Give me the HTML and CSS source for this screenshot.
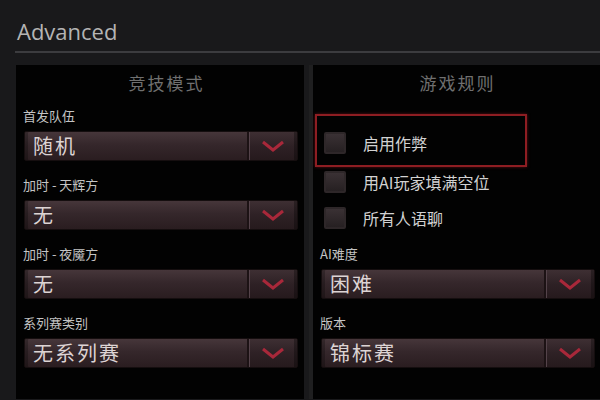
FILE: index.html
```html
<!DOCTYPE html>
<html lang="zh-CN">
<head>
    <meta charset="UTF-8">
    <meta name="viewport" content="width=device-width, initial-scale=1.0">
    <title>Advanced</title>
    <link rel="stylesheet" href="styles.css">
</head>
<body>
    <div class="settings">
        <h1 class="settings-title">Advanced</h1>
        <div class="settings-rule"></div>

        <div class="columns">
            <!-- left column: match mode -->
            <section class="panel">
                <h2 class="panel-title">竞技模式</h2>

                <div class="field field-first">
                    <div class="field-label">首发队伍</div>
                    <div class="dropdown">
                        <span class="dropdown-value">随机</span>
                        <span class="dropdown-arrow">
                            <svg width="24" height="12" viewBox="0 0 24 12"><path d="M2 2 L12 10 L22 2" fill="none" stroke="#a8283a" stroke-width="3"/></svg>
                        </span>
                    </div>
                </div>

                <div class="field">
                    <div class="field-label">加时 - 天辉方</div>
                    <div class="dropdown">
                        <span class="dropdown-value">无</span>
                        <span class="dropdown-arrow">
                            <svg width="24" height="12" viewBox="0 0 24 12"><path d="M2 2 L12 10 L22 2" fill="none" stroke="#a8283a" stroke-width="3"/></svg>
                        </span>
                    </div>
                </div>

                <div class="field">
                    <div class="field-label">加时 - 夜魇方</div>
                    <div class="dropdown">
                        <span class="dropdown-value">无</span>
                        <span class="dropdown-arrow">
                            <svg width="24" height="12" viewBox="0 0 24 12"><path d="M2 2 L12 10 L22 2" fill="none" stroke="#a8283a" stroke-width="3"/></svg>
                        </span>
                    </div>
                </div>

                <div class="field">
                    <div class="field-label">系列赛类别</div>
                    <div class="dropdown">
                        <span class="dropdown-value">无系列赛</span>
                        <span class="dropdown-arrow">
                            <svg width="24" height="12" viewBox="0 0 24 12"><path d="M2 2 L12 10 L22 2" fill="none" stroke="#a8283a" stroke-width="3"/></svg>
                        </span>
                    </div>
                </div>
            </section>

            <!-- right column: game rules -->
            <section class="panel">
                <h2 class="panel-title">游戏规则</h2>

                <div class="check-list">
                    <label class="check-row focused">
                        <span class="check-box"></span>
                        <span class="check-text">启用作弊</span>
                    </label>
                    <label class="check-row">
                        <span class="check-box"></span>
                        <span class="check-text">用AI玩家填满空位</span>
                    </label>
                    <label class="check-row">
                        <span class="check-box"></span>
                        <span class="check-text">所有人语聊</span>
                    </label>
                </div>

                <div class="field field-after-checks">
                    <div class="field-label">AI难度</div>
                    <div class="dropdown">
                        <span class="dropdown-value">困难</span>
                        <span class="dropdown-arrow">
                            <svg width="24" height="12" viewBox="0 0 24 12"><path d="M2 2 L12 10 L22 2" fill="none" stroke="#a8283a" stroke-width="3"/></svg>
                        </span>
                    </div>
                </div>

                <div class="field">
                    <div class="field-label">版本</div>
                    <div class="dropdown">
                        <span class="dropdown-value">锦标赛</span>
                        <span class="dropdown-arrow">
                            <svg width="24" height="12" viewBox="0 0 24 12"><path d="M2 2 L12 10 L22 2" fill="none" stroke="#a8283a" stroke-width="3"/></svg>
                        </span>
                    </div>
                </div>
            </section>
        </div>
    </div>
</body>
</html>
```

FILE: styles.css
```css
* {
    margin: 0;
    padding: 0;
    box-sizing: border-box;
}

body {
    background-color: #19191b;
    height: 400px;
    overflow: hidden;
    font-family: "Noto Sans", "Noto Sans CJK SC", sans-serif;
}

.settings {
    padding: 16px 0 0 16px;
}

.settings-title {
    font-family: "Open Sans", "Noto Sans", sans-serif;
    font-size: 22px;
    font-weight: normal;
    line-height: 30px;
    color: #b4b4b4;
    margin-left: 1px;
}

.settings-rule {
    margin-top: 5px;
    margin-left: -1px;
    height: 2px;
    background: #3c3c3f;
}

.columns {
    display: flex;
    gap: 9px;
    margin-top: 12px;
}

.panel {
    flex: 0 0 288px;
    height: 334px;
    background: #020202;
    padding: 8px 6px 0 7px;
}

.panel + .panel {
    flex-basis: 287px;
    box-shadow: -4px 0 0 #1f1f20;
}

.panel-title {
    font-family: "Noto Sans CJK SC", sans-serif;
    font-size: 17px;
    font-weight: normal;
    letter-spacing: 2px;
    line-height: 20px;
    color: #707070;
    text-align: center;
    padding-left: 12px;
}

.panel + .panel .panel-title {
    padding-left: 0;
}

/* label + dropdown pairs */
.field {
    margin-top: 15px;
}

.field-first {
    margin-top: 14px;
}

.field-after-checks {
    margin-top: 6px;
}

.field-label {
    font-family: "Noto Sans CJK SC", sans-serif;
    font-size: 13px;
    line-height: 18px;
    color: #c4c4c4;
}

.dropdown {
    display: flex;
    height: 30px;
    margin-top: 6px;
    margin-left: 1px;
    width: 274px;
    border: 1px solid #150e0f;
    border-radius: 2px;
    background: linear-gradient(#46363a, #35272b 45%, #2a1d20);
    box-shadow: inset 3px 0 0 rgba(0, 0, 0, 0.25);
}

.dropdown-value {
    flex: 1;
    padding-left: 8px;
    font-family: "Noto Sans CJK SC", sans-serif;
    font-size: 20px;
    letter-spacing: 2px;
    line-height: 28px;
    color: #ddd4d4;
}

.dropdown-arrow {
    width: 50px;
    display: flex;
    align-items: center;
    justify-content: center;
    border-left: 2px solid #1c1214;
    box-shadow: inset 1px 0 0 #54434a, inset -3px 0 0 rgba(0, 0, 0, 0.3);
    background: linear-gradient(#3e2f33, #2e2125 50%, #261a1d);
}

/* game rule toggles */
.check-list {
    margin-top: 21px;
    margin-left: -5px;
    width: 212px;
}

.check-row {
    display: flex;
    align-items: flex-start;
    height: 36px;
    padding: 4px 0 0 7px;
}

.check-row.focused {
    height: 53px;
    padding-top: 16px;
    border: 2px solid #8e1d22;
    box-shadow: 0 0 3px rgba(180, 30, 40, 0.5);
}

.focused + .check-row {
    padding-left: 9px;
}

.focused + .check-row + .check-row {
    padding-left: 9px;
}

.check-box {
    width: 22px;
    height: 22px;
    border: 2px solid #2e2729;
    border-radius: 2px;
    background: linear-gradient(#3a3134, #262022);
}

.check-text {
    margin-left: 17px;
    font-family: "Noto Sans CJK SC", sans-serif;
    font-size: 16px;
    line-height: 22px;
    color: #d2d2d2;
}
```
